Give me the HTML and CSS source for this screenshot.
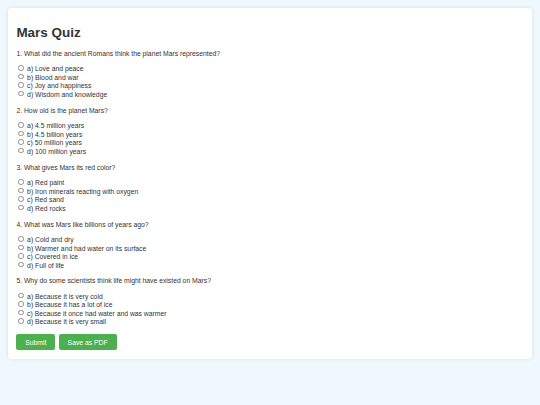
FILE: index.html
```html
<!DOCTYPE html>
<html lang="en">
<head>
<meta charset="utf-8">
<title>Mars Quiz</title>
<link rel="stylesheet" href="styles.css">
</head>
<body>
<div class="card">
  <h1 class="title">Mars Quiz</h1>
  <div class="question">
    <p class="q-text">1. What did the ancient Romans think the planet Mars represented?</p>
    <label class="option"><input type="radio" name="q1"> a) Love and peace</label>
    <label class="option"><input type="radio" name="q1"> b) Blood and war</label>
    <label class="option"><input type="radio" name="q1"> c) Joy and happiness</label>
    <label class="option"><input type="radio" name="q1"> d) Wisdom and knowledge</label>
  </div>
  <div class="question">
    <p class="q-text">2. How old is the planet Mars?</p>
    <label class="option"><input type="radio" name="q2"> a) 4.5 million years</label>
    <label class="option"><input type="radio" name="q2"> b) 4.5 billion years</label>
    <label class="option"><input type="radio" name="q2"> c) 50 million years</label>
    <label class="option"><input type="radio" name="q2"> d) 100 million years</label>
  </div>
  <div class="question">
    <p class="q-text">3. What gives Mars its red color?</p>
    <label class="option"><input type="radio" name="q3"> a) Red paint</label>
    <label class="option"><input type="radio" name="q3"> b) Iron minerals reacting with oxygen</label>
    <label class="option"><input type="radio" name="q3"> c) Red sand</label>
    <label class="option"><input type="radio" name="q3"> d) Red rocks</label>
  </div>
  <div class="question">
    <p class="q-text">4. What was Mars like billions of years ago?</p>
    <label class="option"><input type="radio" name="q4"> a) Cold and dry</label>
    <label class="option"><input type="radio" name="q4"> b) Warmer and had water on its surface</label>
    <label class="option"><input type="radio" name="q4"> c) Covered in ice</label>
    <label class="option"><input type="radio" name="q4"> d) Full of life</label>
  </div>
  <div class="question">
    <p class="q-text">5. Why do some scientists think life might have existed on Mars?</p>
    <label class="option"><input type="radio" name="q5"> a) Because it is very cold</label>
    <label class="option"><input type="radio" name="q5"> b) Because it has a lot of ice</label>
    <label class="option"><input type="radio" name="q5"> c) Because it once had water and was warmer</label>
    <label class="option"><input type="radio" name="q5"> d) Because it is very small</label>
  </div>
  <div class="actions">
    <button class="btn" type="button">Submit</button>
    <button class="btn" type="button">Save as PDF</button>
  </div>
</div>
</body>
</html>
```

FILE: styles.css
```css
html, body {
  margin: 0;
  padding: 0;
}
body {
  background: #f0f8ff;
  font-family: "Liberation Sans", Arial, sans-serif;
  font-size: 6.8px;
  color: #333;
  padding: 8px;
}
.card {
  background: #fff;
  border-radius: 4px;
  box-shadow: 0 0 4px rgba(0, 0, 0, 0.1);
  padding: 8.4px;
}
.title {
  font-size: 13.44px;
  line-height: 15.4px;
  font-weight: bold;
  margin: 9px 0;
  color: #333;
}
.question {
  margin-bottom: 8.4px;
}
.q-text {
  margin: 6.72px 0;
  line-height: 7.8px;
}
.option {
  display: block;
  line-height: 8.5px;
  height: 8.5px;
}
.option input {
  appearance: none;
  -webkit-appearance: none;
  box-sizing: border-box;
  width: 5.5px;
  height: 5.5px;
  border: 0.6px solid #8d8d8d;
  border-radius: 50%;
  background: #fff;
  margin: 1px 1.26px 0 2.1px;
}
.actions {
  display: flex;
  gap: 3.4px;
}
.btn {
  background: #4caf50;
  color: #fff;
  border: none;
  border-radius: 2px;
  padding: 4.2px 8.9px;
  font-family: "Liberation Sans", Arial, sans-serif;
  font-size: 6.8px;
  line-height: 7.7px;
}
```
